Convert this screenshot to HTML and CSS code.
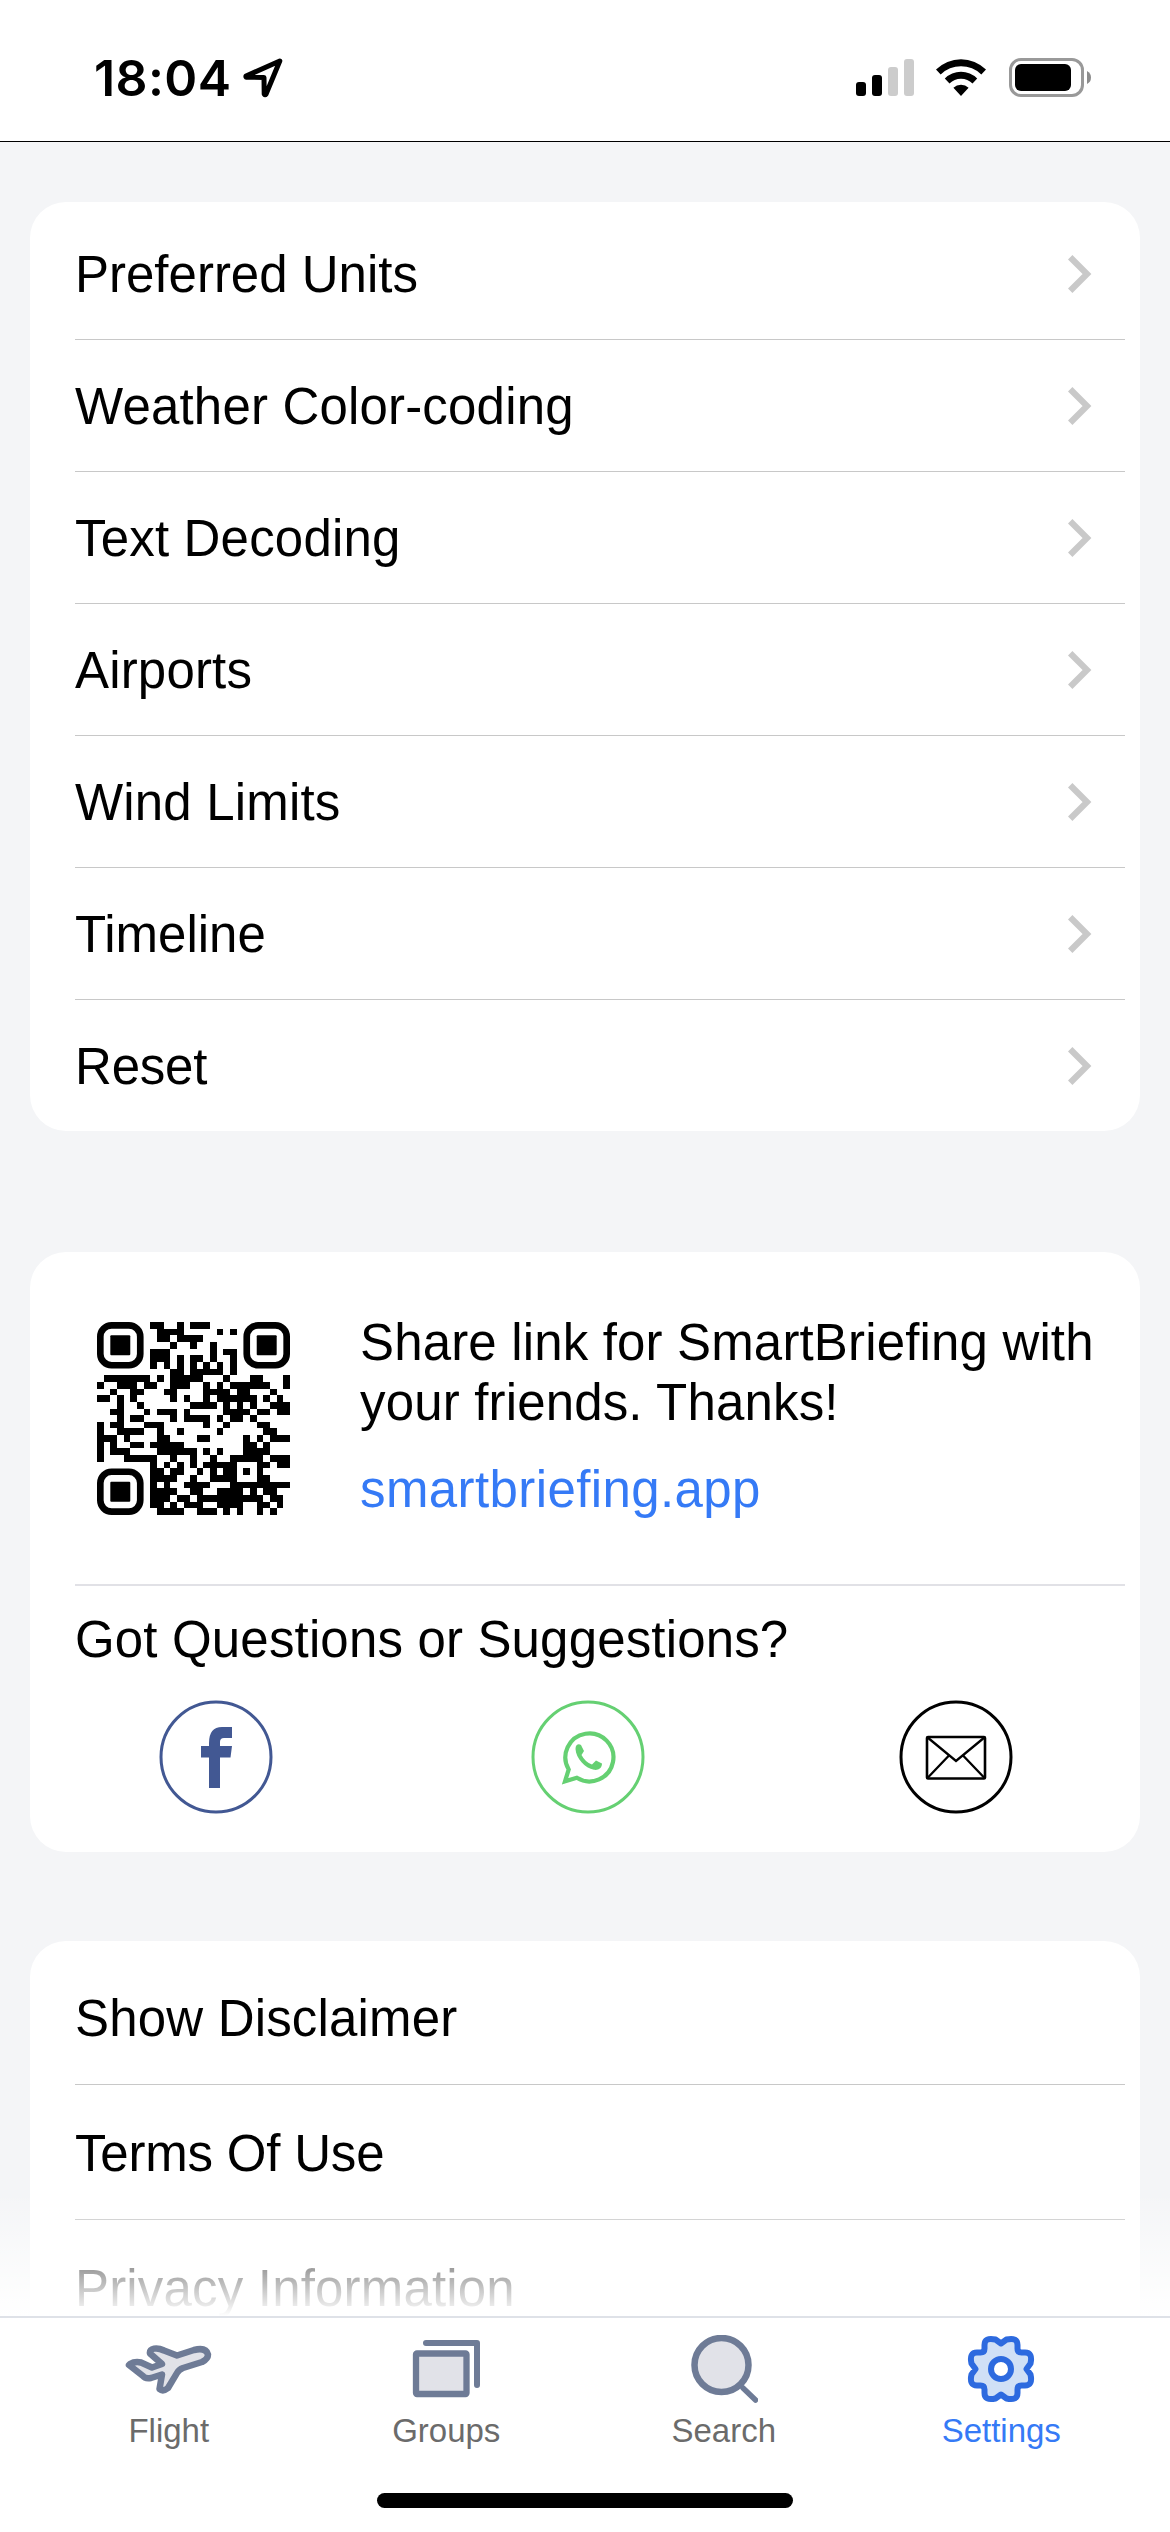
FILE: index.html
```html
<!DOCTYPE html>
<html lang="en">
<head>
<meta charset="utf-8">
<title>Settings</title>
<link rel="stylesheet" href="styles.css">
</head>
<body>
<svg class="defs" width="0" height="0">
  <symbol id="chevron" viewBox="0 0 24 38"><path d="M2.2 2.2 19 19 2.2 35.8" fill="none" stroke="#c9c9c9" stroke-width="6.2"/></symbol>
</svg>

<header class="status">
  <div class="clock">
    <span class="time">18:04</span>
    <svg class="locate" width="40" height="40" viewBox="0 0 40 40"><path d="M36.800 3 3 18Q2.600 19 3.600 19.200L21 19.500 21.200 36Q22 37.500 23 36.200Z" fill="none" stroke="#000" stroke-width="5" stroke-linejoin="round"/></svg>
  </div>
  <div class="indicators">
    <svg width="58" height="37" viewBox="0 0 58 37"><rect y="23" width="10" height="14" rx="3"/><rect x="16" y="16" width="10" height="21" rx="3"/><g fill="#ccc"><rect x="32" y="8" width="10" height="29" rx="3"/><rect x="48" width="10" height="37" rx="3"/></g></svg>
    <svg class="wifi" width="50" height="37" viewBox="0 0 50 37"><path d="M0 10.500A35.500 35.500 0 0 1 50 10.500L45.300 15.500A29 29 0 0 0 4.700 15.500ZM8.800 19.500A23 23 0 0 1 41.200 19.500L36.500 24.500A16.500 16.500 0 0 0 13.500 24.500ZM17.400 28.800A11 11 0 0 1 32.600 28.800L25 37Z"/></svg>
    <svg class="battery" width="83" height="39" viewBox="0 0 83 39"><rect x="1.500" y="1.500" width="72" height="36" rx="10.500" fill="none" stroke="#999" stroke-width="3"/><rect x="6" y="6" width="56" height="27" rx="6"/><path d="M78 13Q82 15 82 19.500T78 26Z" fill="#8c8c8c"/></svg>
  </div>
</header>

<main class="content">
  <section class="card menu">
    <div class="row"><span>Preferred Units</span><svg class="chev"><use href="#chevron"/></svg></div>
    <div class="row"><span class="loose">Weather Color-coding</span><svg class="chev"><use href="#chevron"/></svg></div>
    <div class="row"><span class="loose">Text Decoding</span><svg class="chev"><use href="#chevron"/></svg></div>
    <div class="row"><span class="loose">Airports</span><svg class="chev"><use href="#chevron"/></svg></div>
    <div class="row"><span class="loose">Wind Limits</span><svg class="chev"><use href="#chevron"/></svg></div>
    <div class="row"><span>Timeline</span><svg class="chev"><use href="#chevron"/></svg></div>
    <div class="row"><span class="tight">Reset</span><svg class="chev"><use href="#chevron"/></svg></div>
  </section>

  <section class="card share">
    <div class="share-top">
      <svg id="qr" class="qr" viewBox="0 0 29 29" data-text="https://smartbriefing.app"></svg>
      <div class="share-text">
        <p>Share link for SmartBriefing with<br>your friends. Thanks!</p>
        <a class="link">smartbriefing.app</a>
      </div>
    </div>
    <p class="question">Got Questions or Suggestions?</p>
    <div class="contacts">
      <svg width="114" height="114" viewBox="0 0 114 114"><circle cx="57" cy="57" r="55" fill="none" stroke="#425893" stroke-width="3"/><path d="M50 88V57.500H42V46H50V43Q50 27 63 27H73V38H65Q61 38 61 42V46H73L71.500 57.500H61V88Z" fill="#425893"/></svg>
      <svg width="114" height="114" viewBox="0 0 114 114"><g fill="none" stroke="#65d072"><circle cx="57" cy="57" r="55" stroke-width="3"/><path d="M34 81.300 37.700 69.500A24 24 0 1 1 45.800 77.800Z" stroke-width="4.200"/></g><path d="M44.500 49C44.500 44 48 43.500 50 45L53 51 50.500 55Q54.500 62.500 61 64.500L65 60.500 71 63.500C71 68.500 67 70.500 63 69.800C54 68 45 58.500 44.500 49Z" fill="#65d072"/></svg>
      <svg width="114" height="114" viewBox="0 0 114 114" fill="none" stroke="#000"><circle cx="57" cy="57" r="55" stroke-width="3"/><rect x="28" y="37" width="58" height="41.500" rx="1" stroke-width="2.600"/><path d="M28 37 57 61 86 37M28 78.500 49.500 56M86 78.500 64.500 56" stroke-width="2.300"/></svg>
    </div>
  </section>

  <section class="card legal">
    <div class="row"><span class="loose">Show Disclaimer</span></div>
    <div class="row"><span class="tight">Terms Of Use</span></div>
    <div class="row"><span class="loose">Privacy Information</span></div>
  </section>
  <div class="fade"></div>
</main>

<nav class="tabs">
  <div class="tab">
    <svg width="88" height="68" viewBox="0 0 88 68"><path d="M5 18Q10 15 16 16.500L27 21.500 37 18 25 7.500C24 2 32 1 39 4.500L52 9.500 69 4Q81 1 83 8.500Q83 13 77 16L58 22Q54 23.500 52 27L43 42Q38 46 34.500 43L37 28.500 26 32Q20 33 18 30L4 19Z" transform="translate(0 11)" fill="#e1e2e8" stroke="#6e7b96" stroke-width="6.500" stroke-linejoin="round"/></svg>
    <span>Flight</span>
  </div>
  <div class="tab">
    <svg width="68" height="68" viewBox="0 0 68 68" stroke="#6e7b96" stroke-width="6"><path d="M14 8H65V50" fill="none" stroke-linecap="round" stroke-linejoin="round"/><rect x="4" y="18.500" width="50.500" height="40.500" rx="1" fill="#e1e2e8" stroke-width="6.300"/></svg>
    <span>Groups</span>
  </div>
  <div class="tab">
    <svg width="68" height="68" viewBox="0 0 68 68" stroke="#6e7b96"><path d="M53 53 65.500 65" stroke-width="5.500" stroke-linecap="round"/><circle cx="31.500" cy="30" r="27" fill="#e1e2e8" stroke-width="6.500"/></svg>
    <span>Search</span>
  </div>
  <div class="tab active">
    <svg width="68" height="68" viewBox="-34 -34 68 68" stroke="#2d6adf" stroke-width="6" stroke-linejoin="round"><path d="M0-25.500 5.500-29.500Q16.500-32 16.500-24V-20.500Q16.500-16.500 20.500-16.500H24Q32-16.500 29.500-5.500L25.500 0 29.500 5.500Q32 16.500 24 16.500H20.500Q16.500 16.500 16.500 20.500V24Q16.500 32 5.500 29.500L0 25.500-5.500 29.500Q-16.500 32-16.500 24V20.500Q-16.500 16.500-20.500 16.500H-24Q-32 16.500-29.500 5.500L-25.500 0-29.500-5.500Q-32-16.500-24-16.500H-20.500Q-16.500-16.500-16.500-20.500V-24Q-16.500-32-5.500-29.500Z" fill="#d0e0f6"/><circle r="10" fill="#fff"/></svg>
    <span>Settings</span>
  </div>
</nav>
<div class="home"></div>
<script src="qr.js"></script>
</body>
</html>
```
FILE: styles.css
```css
* { box-sizing: border-box; }

body {
  margin: 0;
  width: 1170px;
  height: 2532px;
  display: flex;
  flex-direction: column;
  overflow: hidden;
  background: #fff;
  color: #000;
  font: 51px/60px "Liberation Sans", Arial, sans-serif;
}

p { margin: 0; }
svg { display: block; flex: none; }
.defs { display: none; }

.status {
  height: 142px;
  border-bottom: 1px solid #000;
  display: flex;
  justify-content: space-between;
  align-items: flex-start;
  padding: 58px 78px 0 94px;
}
.clock { display: flex; align-items: flex-start; }
.time { width: 149px; font: 600 50px/40px Inter, sans-serif; letter-spacing: 0.4px; }
.indicators { display: flex; align-items: flex-start; padding-top: 1px; }
.wifi { margin-left: 22px; }
.battery { margin: -1px 0 0 23px; }

.content {
  position: relative;
  height: 2174px;
  overflow: hidden;
  padding: 60px 30px 0;
  background: #f4f5f7;
}
.card { border-radius: 36px; background: #fff; }

.menu { height: 929px; padding-top: 6px; }
.row {
  height: 132px;
  margin: 0 15px 0 45px;
  padding: 2px 33px 0 0;
  border-bottom: 1px solid #c8c8c8;
  display: flex;
  align-items: center;
  justify-content: space-between;
}
.row:last-child { border-bottom-color: transparent; }
.loose { letter-spacing: 0.18px; }
.tight { letter-spacing: -0.2px; }
.chev { width: 24px; height: 38px; margin-bottom: 1px; }

.share { height: 600px; margin-top: 121px; }
.share-top {
  height: 334px;
  margin: 0 15px 0 45px;
  padding: 70px 0 0 22px;
  border-bottom: 2px solid #e1e1e6;
  display: flex;
}
.qr { width: 193px; height: 193px; }
.share-text { margin: -9px 0 0 70px; letter-spacing: 0.16px; white-space: nowrap; }
.link { display: block; margin-top: 27px; letter-spacing: 0.4px; color: #357af6; }
.question { margin: 24px 0 0 45px; letter-spacing: 0.16px; }
.contacts {
  display: grid;
  grid-template-columns: 372px 368px 114px;
  padding: 30px 0 0 129px;
}

.legal { height: 460px; margin-top: 89px; padding-top: 9px; }
.legal .row { height: 135px; padding-top: 3px; }

.fade {
  position: absolute;
  left: 0;
  right: 0;
  bottom: 0;
  height: 124px;
  background: linear-gradient(rgba(255, 255, 255, 0), #fff);
}

.tabs {
  height: 177px;
  padding: 17px 30px 0;
  border-top: 2px solid #dfe2e8;
  display: flex;
}
.tab {
  flex: 1;
  display: flex;
  flex-direction: column;
  align-items: center;
  color: #6b6b6b;
  font-size: 33px;
  line-height: 40px;
}
.tab span { margin-top: 8px; }
.active { color: #357af6; }

.home { width: 416px; height: 15px; margin: 0 auto; border-radius: 8px; background: #000; }
```
FILE: qr.js
```js
// Draws a version 3-Q QR code (29x29, byte mode, mask 2) with rounded finder rings.
const SIZE = 29, BLOCKS = 2, DATA = 17, ECC = 18;

const EXP = [], LOG = [];
let v = 1;
for (let i = 0; i < 255; i++) {
  EXP[i] = v;
  LOG[v] = i;
  v <<= 1;
  if (v & 256) v ^= 285;
}
const mul = (a, b) => (a && b ? EXP[(LOG[a] + LOG[b]) % 255] : 0);

function errorCodes(data) {
  let gen = [1];
  for (let i = 0; i < ECC; i++) {
    const next = Array(gen.length + 1).fill(0);
    gen.forEach((c, j) => { next[j] ^= c; next[j + 1] ^= mul(c, EXP[i]); });
    gen = next;
  }
  const rem = data.concat(Array(ECC).fill(0));
  for (let i = 0; i < data.length; i++) {
    const f = rem[i];
    if (f) gen.forEach((c, j) => { rem[i + j] ^= mul(c, f); });
  }
  return rem.slice(data.length);
}

const byte = x => x.toString(2).padStart(8, '0');

function encode(text) {
  const bits = '0100' + byte(text.length) + [...text].map(c => byte(c.charCodeAt(0))).join('') + '0000';
  const data = [];
  for (let i = 0; i < bits.length; i += 8) data.push(parseInt(bits.slice(i, i + 8), 2));
  for (let p = 0; data.length < BLOCKS * DATA; p++) data.push(p % 2 ? 17 : 236);
  const blocks = [data.slice(0, DATA), data.slice(DATA)];
  const codes = blocks.map(errorCodes);
  const all = [];
  for (let i = 0; i < DATA; i++) blocks.forEach(b => all.push(b[i]));
  for (let i = 0; i < ECC; i++) codes.forEach(b => all.push(b[i]));
  return all.map(byte).join('') + '0000000';
}

function matrix(text) {
  const stream = encode(text);
  const m = Array.from({ length: SIZE }, () => Array(SIZE).fill(-1));
  // Finder areas stay blank here; their rings are drawn as rounded shapes.
  for (const [r0, c0] of [[0, 0], [0, 21], [21, 0]])
    for (let r = 0; r < 8; r++) for (let c = 0; c < 8; c++) m[r0 + r][c0 + c] = 0;
  for (let r = -2; r < 3; r++)
    for (let c = -2; c < 3; c++)
      m[22 + r][22 + c] = Math.max(Math.abs(r), Math.abs(c)) === 1 ? 0 : 1;
  for (let i = 8; i < 21; i++) m[6][i] = m[i][6] = (i + 1) % 2;

  const format = 0b011111100110001;
  const g = i => (format >> i) & 1;
  for (let i = 0; i < 6; i++) m[i][8] = g(i);
  m[7][8] = g(6);
  m[8][8] = g(7);
  m[8][7] = g(8);
  for (let i = 9; i < 15; i++) m[8][14 - i] = g(i);
  for (let i = 0; i < 8; i++) m[8][SIZE - 1 - i] = g(i);
  for (let i = 8; i < 15; i++) m[SIZE - 15 + i][8] = g(i);
  m[SIZE - 8][8] = 1;

  let k = 0, up = true;
  for (let c = SIZE - 1; c > 0; c -= 2) {
    if (c === 6) c--;
    for (let j = 0; j < SIZE; j++) {
      const r = up ? SIZE - 1 - j : j;
      for (const x of [c, c - 1]) if (m[r][x] < 0) m[r][x] = +stream[k++] ^ (x % 3 === 0 ? 1 : 0);
    }
    up = !up;
  }
  return m;
}

const qr = document.getElementById('qr');
let path = '';
matrix(qr.dataset.text).forEach((row, y) => {
  for (let x = 0; x < SIZE; x++) {
    if (!row[x]) continue;
    let end = x;
    while (row[end + 1]) end++;
    path += `M${x} ${y}h${end - x + 1}v1h${x - end - 1}z`;
    x = end;
  }
});
const finder = (x, y) =>
  `<rect x="${x + 0.5}" y="${y + 0.5}" width="6" height="6" rx="1.7" fill="none" stroke="#000"/>` +
  `<rect x="${x + 2}" y="${y + 2}" width="3" height="3" rx=".15"/>`;
qr.innerHTML = `<path shape-rendering="crispEdges" d="${path}"/>` + finder(0, 0) + finder(22, 0) + finder(0, 22);
```
